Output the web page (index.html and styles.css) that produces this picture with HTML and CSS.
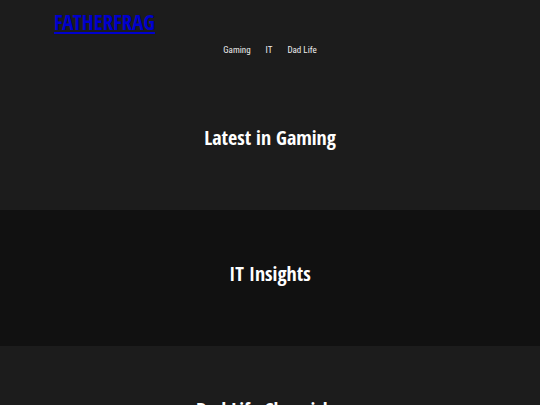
FILE: index.html
```html
<!DOCTYPE html>
<html lang="en">
<head>
    <meta charset="UTF-8">
    <meta name="viewport" content="width=device-width, initial-scale=1.0">
    <title>FATHERFRAG</title>
    <link rel="stylesheet" href="styles.css">
</head>
<body>

<header>
    <div class="container">
        <h1 class="logo"><a href="#">FATHERFRAG</a></h1>
        <nav>
            <ul>
                <li><a href="#gaming">Gaming</a></li>
                <li><a href="#it">IT</a></li>
                <li><a href="#dad-life">Dad Life</a></li>
            </ul>
        </nav>
    </div>
</header>

<section id="gaming" class="section">
    <h2>Latest in Gaming</h2>
</section>

<section id="it" class="section dark">
    <h2>IT Insights</h2>
</section>

<section id="dad-life" class="section">
    <h2>Dad Life Chronicles</h2>
</section>

</body>
</html>
```

FILE: styles.css
```css
* {
    margin: 0;
    padding: 0;
    box-sizing: border-box;
}

body {
    font-family: "Open Sans Condensed", "Noto Sans", sans-serif;
    background-color: #111;
    color: #fff;
    overflow-x: hidden;
}

header {
    background-color: #1c1c1c;
    padding: 8px 0 14px;
}

.container {
    width: 80%;
    margin: 0 auto;
}

.logo {
    font-size: 21px;
    line-height: 28px;
}

.logo a {
    color: #0000cd;
}

nav ul {
    display: flex;
    justify-content: center;
    gap: 15px;
    list-style: none;
    padding-top: 4px;
}

nav ul li a {
    display: block;
    color: #eee;
    font-family: "Roboto Condensed", "Noto Sans", sans-serif;
    font-size: 9px;
    font-weight: 400;
    line-height: 20px;
    text-decoration: none;
}

.section {
    background-color: #1c1c1c;
    padding: 50px 20px 58px;
    text-align: center;
}

.section h2 {
    font-size: 20px;
    line-height: 28px;
}

.dark {
    background-color: #111;
}
```
